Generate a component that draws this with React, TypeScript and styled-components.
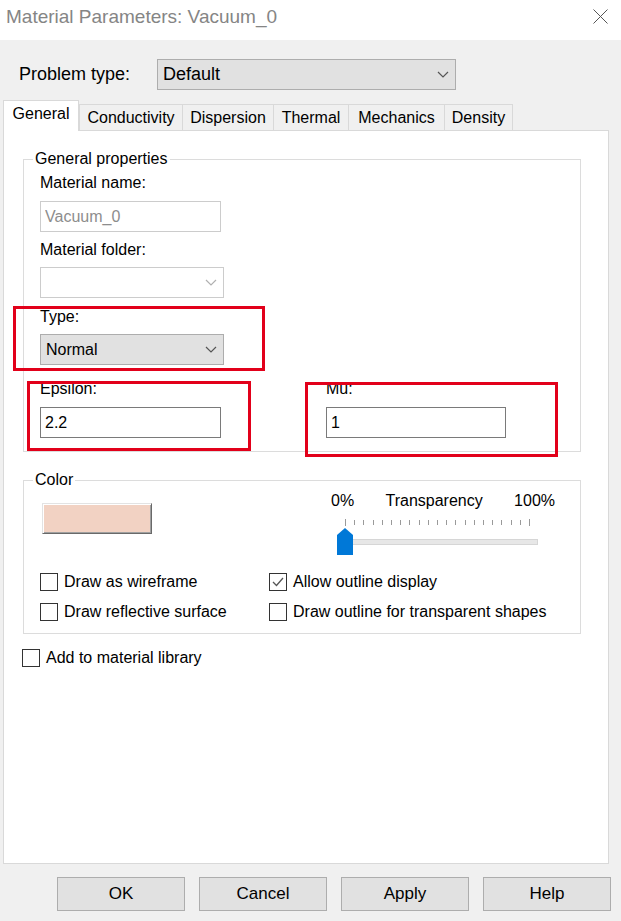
import React from "react";
import styled, { createGlobalStyle } from "styled-components";

const GlobalStyle = createGlobalStyle`
  html, body {
    margin: 0;
    padding: 0;
    background: #f0f0f0;
  }
  body {
    font-family: "Liberation Sans", Arial, sans-serif;
    color: #000;
  }
  * {
    box-sizing: border-box;
  }
`;

const Chevron = ({ color = "#555" }: { color?: string }) => (
  <svg width="12" height="7" viewBox="0 0 12 7">
    <path d="M1 1 L6 6 L11 1" fill="none" stroke={color} strokeWidth="1.2" />
  </svg>
);

const CloseIcon = () => (
  <svg width="15" height="15" viewBox="0 0 15 15">
    <path d="M0.5 0.5 L14.5 14.5 M14.5 0.5 L0.5 14.5" stroke="#555" strokeWidth="1" />
  </svg>
);

const TransparencySlider = () => {
  const ticks = Array.from({ length: 21 }, (_, i) => 14 + i * 9.2);
  return (
    <svg width="224" height="46" viewBox="0 0 224 46">
      {ticks.map((x, i) => {
        const edge = i === 0 || i === ticks.length - 1;
        return (
          <line
            key={i}
            x1={Math.round(x) + 0.5}
            x2={Math.round(x) + 0.5}
            y1={edge ? 8 : 9}
            y2={edge ? 15 : 14}
            stroke="#9a9a9a"
            strokeWidth="1"
          />
        );
      })}
      <rect x="19.5" y="28.5" width="187" height="5" fill="#e7e7e7" stroke="#d6d6d6" />
      <polygon points="6,24 14,17 22,24 22,44 6,44" fill="#0078d7" />
    </svg>
  );
};

const CheckMark = () => (
  <svg width="16" height="16" viewBox="0 0 16 16">
    <path d="M3 8 L6.5 11.5 L13 4" fill="none" stroke="#555" strokeWidth="1.3" />
  </svg>
);

const tabs = [
  { name: "General", width: 76 },
  { name: "Conductivity", width: 104 },
  { name: "Dispersion", width: 92 },
  { name: "Thermal", width: 76 },
  { name: "Mechanics", width: 97 },
  { name: "Density", width: 69 },
];

export default function App() {
  return (
    <>
      <GlobalStyle />
      <Window>
        <TitleBar>
          <Title>Material Parameters: Vacuum_0</Title>
          <CloseBox>
            <CloseIcon />
          </CloseBox>
        </TitleBar>

        <Body>
          <ProblemRow>
            <ProblemLabel>Problem type:</ProblemLabel>
            <ComboBox $w={299} $big>
              <span>Default</span>
              <Chevron />
            </ComboBox>
          </ProblemRow>

          <TabStrip>
            {tabs.map((t, i) => (
              <Tab key={t.name} $active={i === 0} $w={t.width}>
                {t.name}
              </Tab>
            ))}
          </TabStrip>

          <Panel>
            <GroupBox $top={18}>
              <Legend>General properties</Legend>
              <GroupContent>
                <FieldLabel $mt={4}>Material name:</FieldLabel>
                <TextInput $w={181} $mt={8} disabled readOnly defaultValue="Vacuum_0" />
                <FieldLabel $mt={8}>Material folder:</FieldLabel>
                <ComboBox $w={184} $mt={7} $disabled>
                  <span />
                  <Chevron color="#b0b0b0" />
                </ComboBox>

                <Annotated>
                  <FieldLabel $mt={9}>Type:</FieldLabel>
                  <ComboBox $w={184} $mt={7}>
                    <span>Normal</span>
                    <Chevron />
                  </ComboBox>
                  <Highlight $t={8} $l={-27} $r={-41} $b={-6} />
                </Annotated>

                <ValueRow>
                  <Annotated>
                    <FieldLabel>Epsilon:</FieldLabel>
                    <TextInput $w={181} $mt={8} readOnly defaultValue="2.2" />
                    <Highlight $t={2} $l={-13} $r={-30} $b={-13} />
                  </Annotated>
                  <Annotated>
                    <FieldLabel>Mu:</FieldLabel>
                    <TextInput $w={180} $mt={8} readOnly defaultValue="1" />
                    <Highlight $t={3} $l={-21} $r={-52} $b={-19} />
                  </Annotated>
                </ValueRow>
              </GroupContent>
            </GroupBox>

            <GroupBox $top={18}>
              <Legend>Color</Legend>
              <ColorTop>
                <Swatch />
                <Transparency>
                  <ScaleLabels>
                    <span>0%</span>
                    <span>Transparency</span>
                    <span>100%</span>
                  </ScaleLabels>
                  <TransparencySlider />
                </Transparency>
              </ColorTop>
              <CheckGrid>
                <CheckRow>
                  <Box />
                  Draw as wireframe
                </CheckRow>
                <CheckRow>
                  <Box>
                    <CheckMark />
                  </Box>
                  Allow outline display
                </CheckRow>
                <CheckRow>
                  <Box />
                  Draw reflective surface
                </CheckRow>
                <CheckRow>
                  <Box />
                  Draw outline for transparent shapes
                </CheckRow>
              </CheckGrid>
            </GroupBox>

            <LibraryRow>
              <Box />
              Add to material library
            </LibraryRow>
          </Panel>

          <Footer>
            <Button>OK</Button>
            <Button>Cancel</Button>
            <Button>Apply</Button>
            <Button>Help</Button>
          </Footer>
        </Body>
      </Window>
    </>
  );
}

const Window = styled.div`
  width: 621px;
  height: 921px;
  background: #f0f0f0;
  display: flex;
  flex-direction: column;
  overflow: hidden;
`;

const TitleBar = styled.div`
  height: 40px;
  flex: none;
  background: #fff;
  display: flex;
  justify-content: space-between;
  align-items: flex-start;
  padding: 5px 13px 0 6px;
`;

const Title = styled.div`
  font-size: 19px;
  line-height: 24px;
  color: #858585;
`;

const CloseBox = styled.div`
  margin-top: 4px;
  line-height: 0;
`;

const Body = styled.div`
  display: flex;
  flex-direction: column;
  padding: 0 12px 0 3px;
`;

const ProblemRow = styled.div`
  display: flex;
  align-items: center;
  margin-top: 19px;
  padding-left: 16px;
`;

const ProblemLabel = styled.div`
  width: 138px;
  font-size: 18px;
`;

const ComboBox = styled.div<{ $w: number; $mt?: number; $big?: boolean; $disabled?: boolean }>`
  width: ${(p) => p.$w}px;
  height: 31px;
  margin-top: ${(p) => p.$mt ?? 0}px;
  display: flex;
  align-items: center;
  justify-content: space-between;
  padding: 0 6px 0 5px;
  font-size: ${(p) => (p.$big ? 18 : 16)}px;
  background: ${(p) => (p.$disabled ? "#fff" : "#e1e1e1")};
  border: 1px solid ${(p) => (p.$disabled ? "#cccccc" : "#adadad")};
`;

const TabStrip = styled.div`
  display: flex;
  align-items: flex-end;
  height: 31px;
  margin-top: 10px;
  margin-bottom: -1px;
  position: relative;
  z-index: 1;
`;

const Tab = styled.div<{ $active?: boolean; $w: number }>`
  width: ${(p) => p.$w}px;
  height: ${(p) => (p.$active ? 31 : 26)}px;
  margin-bottom: ${(p) => (p.$active ? 0 : 1)}px;
  margin-left: ${(p) => (p.$active ? 0 : -1)}px;
  padding-bottom: ${(p) => (p.$active ? 4 : 0)}px;
  display: flex;
  align-items: center;
  justify-content: center;
  font-size: 16px;
  white-space: nowrap;
  background: ${(p) => (p.$active ? "#fff" : "#f0f0f0")};
  border: 1px solid #d9d9d9;
  border-bottom: none;
  &:nth-child(2) {
    margin-left: 0;
  }
`;

const Panel = styled.div`
  height: 734px;
  background: #fff;
  border: 1px solid #d9d9d9;
  display: flex;
  flex-direction: column;
`;

const GroupBox = styled.fieldset<{ $top: number }>`
  margin: ${(p) => p.$top}px 27px 0 19px;
  padding: 0;
  min-width: 0;
  border: 1px solid #dcdcdc;
`;

const Legend = styled.legend`
  margin-left: 9px;
  padding: 0 2px;
  font-size: 16px;
  line-height: 20px;
`;

const GroupContent = styled.div`
  padding: 0 16px 13px;
`;

const FieldLabel = styled.div<{ $mt?: number }>`
  margin-top: ${(p) => p.$mt ?? 0}px;
  font-size: 16px;
  line-height: 20px;
`;

const TextInput = styled.input<{ $w: number; $mt?: number }>`
  display: block;
  width: ${(p) => p.$w}px;
  height: 31px;
  margin: ${(p) => p.$mt ?? 0}px 0 0;
  padding: 0 4px;
  font-family: "Liberation Sans", Arial, sans-serif;
  font-size: 16px;
  color: #000;
  background: #fff;
  border: 1px solid #7a7a7a;
  outline: none;
  &:disabled {
    color: #8d8d8d;
    border-color: #cccccc;
  }
`;

const Annotated = styled.div`
  position: relative;
  display: flow-root;
  width: fit-content;
`;

const Highlight = styled.div<{ $t: number; $l: number; $r: number; $b: number }>`
  position: absolute;
  top: ${(p) => p.$t}px;
  left: ${(p) => p.$l}px;
  right: ${(p) => p.$r}px;
  bottom: ${(p) => p.$b}px;
  border: 3px solid #e2001a;
  pointer-events: none;
`;

const ValueRow = styled.div`
  display: flex;
  gap: 105px;
  margin-top: 14px;
`;

const ColorTop = styled.div`
  display: flex;
  justify-content: space-between;
  align-items: flex-start;
  padding: 0 25px 0 18px;
`;

const Swatch = styled.div`
  width: 110px;
  height: 31px;
  margin-top: 13px;
  background: #f2d2c3;
  border: 1px solid;
  border-color: #e3e3e3 #696969 #696969 #e3e3e3;
  box-shadow: inset 1px 1px 0 #fff, inset -1px -1px 0 #a0a0a0;
`;

const Transparency = styled.div`
  width: 224px;
  margin-top: 1px;
  line-height: 0;
`;

const ScaleLabels = styled.div`
  display: flex;
  justify-content: space-between;
  font-size: 16px;
  line-height: 20px;
`;

const CheckGrid = styled.div`
  display: grid;
  grid-template-columns: 229px auto;
  row-gap: 10px;
  margin-top: 15px;
  padding: 0 0 11px 16px;
`;

const CheckRow = styled.div`
  display: flex;
  align-items: center;
  gap: 6px;
  height: 20px;
  font-size: 16px;
`;

const Box = styled.span`
  width: 18px;
  height: 18px;
  flex: none;
  border: 1px solid #333;
  background: #fff;
  display: flex;
  align-items: center;
  justify-content: center;
`;

const LibraryRow = styled(CheckRow)`
  margin: 14px 0 0 18px;
`;

const Footer = styled.div`
  display: flex;
  justify-content: flex-end;
  gap: 14px;
  margin: 13px -12px 0 0;
  padding-right: 10px;
`;

const Button = styled.button`
  width: 128px;
  height: 34px;
  padding: 0;
  font-family: "Liberation Sans", Arial, sans-serif;
  font-size: 17px;
  color: #000;
  background: #e1e1e1;
  border: 1px solid #adadad;
`;
